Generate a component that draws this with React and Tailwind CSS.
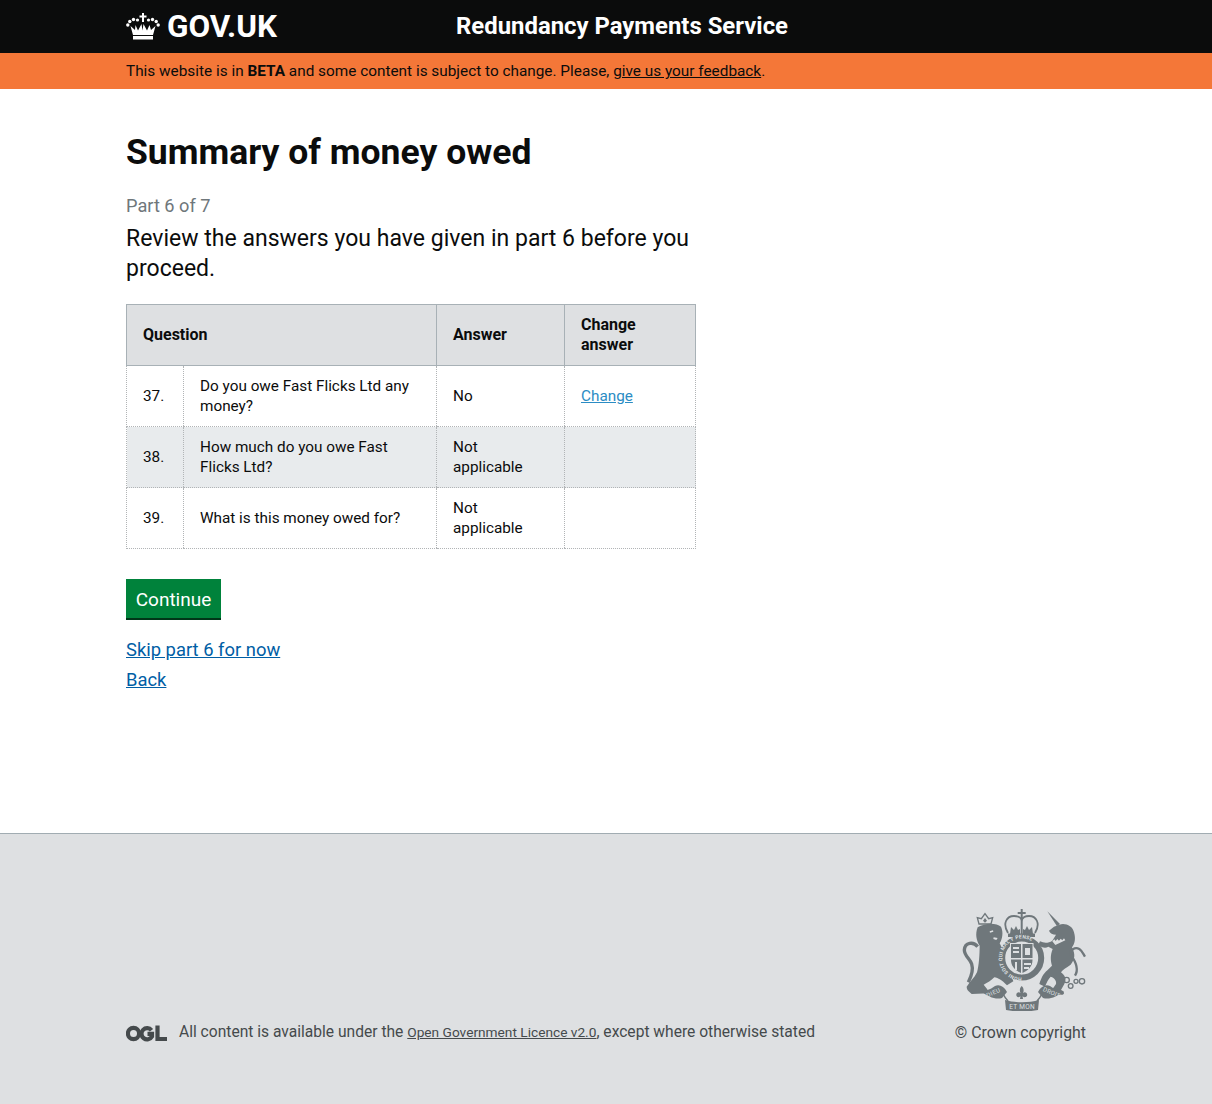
const G = "#6f777b";
const L = "#dee0e2";
function Crown() {
  return (
    <svg width="34" height="27" viewBox="0 0 34 27" fill="#fff" className="block">
      <path d="M16 0h2v2.500h2.500v2H18V9h-2V4.500h-2.500v-2H16z" />
      <circle cx="1.800" cy="12" r="1.700" /><circle cx="3.800" cy="8.500" r="1.700" /><circle cx="7.500" cy="6.500" r="1.700" /><circle cx="11.500" cy="7" r="1.600" />
      <circle cx="22.500" cy="7" r="1.600" /><circle cx="26.500" cy="6.500" r="1.700" /><circle cx="30.200" cy="8.500" r="1.700" /><circle cx="32.200" cy="12" r="1.700" />
      <path d="M7 22h20l2.500-9-4.500 4-1.500-5-2.500 5.500-3.500-6.500-1 6.500L17 10l-.500 7.500-1-6.500-3.500 6.500L9.500 12 9 17l-4.500-4z" />
      <rect x="7" y="23" width="20" height="3.500" />
    </svg>
  );
}
function Ogl() {
  return (
    <svg width="41" height="17" viewBox="0 0 41 17" className="block" fill="none" stroke="#454a4c" strokeWidth="4.200">
      <circle cx="7.500" cy="8.500" r="5.600" />
      <path d="M25.500 5.300A5.600 5.600 0 1 0 26 11.500V8.800h-4.500" />
      <path d="M31.500 0.500V14H41" />
    </svg>
  );
}
function CrestArt() {
  return (
    <svg width="125" height="103" viewBox="0 0 125 103" fill={G} className="block">
      <g transform="translate(-6 -4) scale(0.3333)">
        <path d="M72 60L67 41l12 3 11-15 11 15 12-3-5 19z" fill="none" stroke={G} strokeWidth="4" />
        <path d="M84 50l6-8 6 8-6 6z" />
        <path d="M68 70C90 56 124 56 138 68C146 85 142 105 134 118C142 135 152 150 160 170C166 195 168 215 175 232L156 244C140 228 130 222 118 220C108 230 98 236 86 242C92 250 100 258 103 268L50 270C44 262 35 260 35 248C45 232 58 222 66 205C72 185 74 150 74 125C64 110 60 90 68 70Z" />
        <path d="M68 128C55 112 30 115 28 138C28 155 45 165 50 180C55 195 50 215 40 235" fill="none" stroke={G} strokeWidth="10" />
        <path d="M104 82l10-3 1 4-10 3zM116 100l12 2-4 6-9-3z" fill={L} />
      </g>
      <g transform="translate(59 -4) scale(0.3333)">
        <path d="M82 22L120 60l-9 7z" />
        <path d="M118 62C135 56 158 65 162 85C168 105 164 120 156 130C166 150 166 165 152 182C138 192 128 197 123 205C135 215 141 225 133 240L123 258C133 262 135 270 128 272L95 272C90 262 100 252 108 240C110 232 105 222 92 218C85 225 80 235 75 248L58 240C63 225 68 210 83 198L96 185C92 170 90 155 98 135L85 128C75 135 65 130 55 122L60 112C72 118 85 118 97 110L108 92C98 92 90 88 87 80L102 68Z" />
        <path d="M97 112l6-6 4 5 5-6 5 5 5-6 5 5 5-6 4 6-30 14z" fill={L} />
        <path d="M165 215C178 195 165 170 152 152C148 138 165 128 178 135C186 140 190 150 195 158" fill="none" stroke={G} strokeWidth="7" />
        <g fill="none" stroke={G} strokeWidth="4">
          <circle cx="140" cy="228" r="8" /><circle cx="152" cy="246" r="7" /><circle cx="168" cy="232" r="6" /><circle cx="186" cy="232" r="8" />
        </g>
      </g>
      <path d="M59.700 1h2v3h3v2h-3v5h-2V6h-3V4h3z" />
      <path d="M47 25C41 15 46 8 53 8C57 8 60 10 60.700 12C61.500 10 64 8 68 8C75 8 80 15 74 25" fill="none" stroke={G} strokeWidth="1.800" />
      <path d="M59.700 11h2v15h-2zM49 26l1-7 3 3 2-4 2 4 2-1v5zM62 26v-5l2 1 2-4 2 4 3-3 1 7z" />
      <rect x="47" y="25.500" width="27" height="3.500" />
      <circle cx="60.700" cy="50" r="22" fill={L} />
      <circle cx="60.700" cy="50" r="19.500" fill="none" stroke={G} strokeWidth="6" />
      <path id="crest-garter" d="M60.700 69.500a19.500 19.500 0 1 1 0.010 0" fill="none" />
      <text fontFamily="Roboto, sans-serif" fontSize="5" fill={L} fontWeight="700" letterSpacing="0.200">
        <textPath href="#crest-garter">HONI SOIT QUI MAL Y PENSE</textPath>
      </text>
      <path d="M49 35h23.500v17c0 8-5.500 11-11.700 14.500C54.500 63 49 60 49 52z" fill={L} />
      <path d="M50 36h10v14H50zM61.500 36h10v14h-10zM50 51.500h10V65c-5-2.500-10-6-10-13zM61.500 51.500h10v.5c0 7-5 10.500-10 13z" />
      <path d="M52 39h6v2h-6zM52 43h6v2h-6zM64 40h5v7h-5zM54 54h2v8h-2zM63 55h7v2h-7zM63 59h5v2h-5z" fill={L} />
      <path d="M20 83C27 89 35 92 41 90L46 84C43 78 38 76 34 78C29 82 24 83 20 83Z" />
      <path d="M103 83C96 89 88 92 82 90L77 84C80 78 85 76 89 78C94 82 99 83 103 83Z" />
      <path d="M44 92C54 95 68 95 78 92L77 102C67 104 55 104 45 102Z" />
      <path d="M41 84C43 88 45 91 47 93M82 84C80 88 78 91 76 93" fill="none" stroke={G} strokeWidth="1.500" />
      <path d="M60.700 78C63 80 63 83 62 85C64 83 67 85 66 88C64 90 62 89 61.500 88L62 91h-3l.5-3C59 89 57 90 55.500 88C54.500 85 57.500 83 59.500 85C58.500 83 58.500 80 60.700 78Z" />
      <text x="33" y="86.500" textAnchor="middle" transform="rotate(-24 33 86)" fontFamily="Roboto, sans-serif" fontSize="6" fill={L} letterSpacing="0.400">DIEU</text>
      <text x="90" y="86.500" textAnchor="middle" transform="rotate(24 90 86)" fontFamily="Roboto, sans-serif" fontSize="6" fill={L} letterSpacing="0.200">DROIT</text>
      <text x="61" y="100.500" textAnchor="middle" fontFamily="Roboto, sans-serif" fontSize="6.500" fill={L} letterSpacing="0.300">ET MON</text>
    </svg>
  );
}
function Row({ n, q, a, link, shaded }) {
  const bg = shaded ? "bg-[#e8ebed]" : "bg-white";
  const td = "border-l border-b border-dotted border-[#b1b4b6] align-middle px-4 text-[15.300px] leading-5 font-normal " + bg;
  return (
    <tr className="h-[61px]">
      <td className={td}>{n}</td>
      <td className={td}>{q}</td>
      <td className={td}>{a}</td>
      <td className={td + " border-r"}>{link ? <a href="#" className="text-[#2b8cc4] underline">{link}</a> : null}</td>
    </tr>
  );
}
export default function App() {
  const th = "border border-[#a8b1b6] bg-[#dee0e2] px-4 text-left text-[16px] leading-5 font-bold";
  return (
    <div className="min-h-[1104px] bg-white flex flex-col text-[#0b0c0c] font-['Roboto','Liberation_Sans',sans-serif]">
      <header className="bg-[#0b0c0c] h-[53px] pl-[126px] flex items-center text-white">
        <div className="flex items-center w-[330px] gap-[7px]">
          <Crown />
          <span className="font-bold text-[31.500px] leading-none mt-px">GOV.UK</span>
        </div>
        <span className="font-bold text-[23.900px] leading-none">Redundancy Payments Service</span>
      </header>
      <div className="bg-[#f47738] h-9 pl-[126px] pt-0.5 flex items-center text-[15.350px]">
        <span>This website is in <b>BETA</b> and some content is subject to change. Please, <a href="#" className="underline">give us your feedback</a>.</span>
      </div>
      <main className="flex-1 px-[126px] pt-[41px]">
        <h1 className="text-[35.500px] leading-[45px] font-bold">Summary of money owed</h1>
        <div className="mt-[16px] text-[18.200px] leading-[30px] text-[#6f777b]">Part 6 of 7</div>
        <p className="mt-[3px] text-[23px] leading-[30px] tracking-[0.015px] w-[570px]">Review the answers you have given in part 6 before you proceed.</p>
        <table className="mt-[20px] w-[569px] border-collapse table-fixed">
          <colgroup>
            <col className="w-[57px]" /><col className="w-[253px]" /><col className="w-[128px]" /><col className="w-[131px]" />
          </colgroup>
          <thead>
            <tr className="h-[61px]">
              <th colSpan={2} className={th}>Question</th>
              <th className={th}>Answer</th>
              <th className={th}>Change answer</th>
            </tr>
          </thead>
          <tbody>
            <Row n="37." q="Do you owe Fast Flicks Ltd any money?" a="No" link="Change" />
            <Row n="38." q="How much do you owe Fast Flicks Ltd?" a="Not applicable" shaded />
            <Row n="39." q="What is this money owed for?" a="Not applicable" />
          </tbody>
        </table>
        <button className="mt-[30px] block h-[41px] w-[95px] pt-px bg-[#00823b] border-b-2 border-[#003618] text-white text-[19px] leading-none">Continue</button>
        <div className="mt-[15px] flex flex-col items-start text-[18.400px] leading-[30px] text-[#005ea5]">
          <a href="#" className="underline">Skip part 6 for now</a>
          <a href="#" className="underline">Back</a>
        </div>
      </main>
      <footer className="h-[271px] bg-[#dee0e2] border-t border-[#a1acb2] px-[126px] flex items-end justify-between pb-[61px] text-[#454a4c]">
        <div className="flex items-center gap-3 h-[20px]">
          <Ogl />
          <span className="text-[15.600px] whitespace-nowrap">All content is available under the <a href="#" className="underline text-[13.700px]">Open Government Licence v2.0</a>, except where otherwise stated</span>
        </div>
        <div className="flex flex-col items-end">
          <CrestArt />
          <span className="mt-[12px] text-[15.850px] leading-5 whitespace-nowrap">© Crown copyright</span>
        </div>
      </footer>
    </div>
  );
}
